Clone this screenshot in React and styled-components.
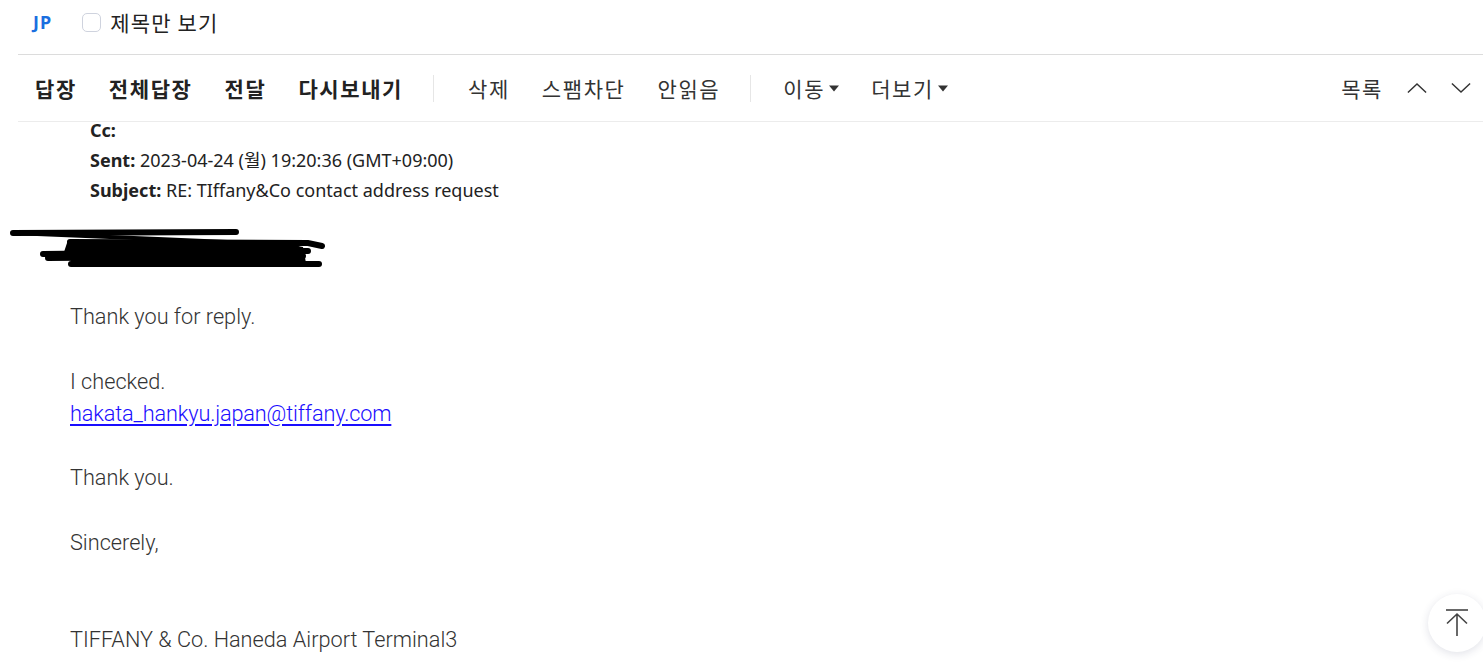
import React from "react";
import styled, { createGlobalStyle } from "styled-components";

const Global = createGlobalStyle`
  html, body { margin: 0; padding: 0; background: #fff; overflow: hidden; }
  body { font-family: "Noto Sans", "Noto Sans CJK KR", sans-serif; color: #222; }
`;

const Page = styled.div`
  width: 1483px;
  height: 666px;
  position: relative;
  overflow: hidden;
`;

const Chrome = styled.div`
  padding-left: 18px;
  position: relative;
  z-index: 2;
  background: #fff;
`;

const TopBar = styled.div`
  height: 55px;
  display: flex;
  align-items: center;
  padding-left: 15px;
  padding-bottom: 10px;
  border-bottom: 1px solid #dcdcdc;
  box-sizing: border-box;
`;

const Lang = styled.span`
  font-family: "Noto Sans", sans-serif;
  font-weight: 700;
  font-size: 18px;
  letter-spacing: 1px;
  color: #1a6fe0;
  margin-right: 30px;
`;

const CheckLabel = styled.label`
  display: flex;
  align-items: center;
  gap: 9px;
  font-family: "Noto Sans CJK KR", sans-serif;
  font-size: 21px;
  letter-spacing: 1.2px;
  color: #222;
  line-height: 1;
`;

const Box = styled.span`
  width: 19px;
  height: 19px;
  box-sizing: border-box;
  border: 1.5px solid #cfd3de;
  border-radius: 5px;
  display: inline-block;
`;

const Toolbar = styled.div`
  height: 67px;
  display: flex;
  align-items: center;
  padding-left: 17px;
  padding-right: 12px;
  border-bottom: 1px solid #ececec;
  box-sizing: border-box;
`;

const Group = styled.div`
  display: flex;
  align-items: center;
  gap: 32px;
`;

const Action = styled.button`
  all: unset;
  font-family: "Noto Sans CJK KR", sans-serif;
  font-size: 21px;
  letter-spacing: 1.6px;
  line-height: 1;
  font-weight: ${(p) => (p.$bold ? 700 : 400)};
  color: ${(p) => (p.$bold ? "#222" : "#333")};
  display: flex;
  align-items: center;
  gap: 4px;
  cursor: pointer;
`;

const Sep = styled.span`
  width: 1px;
  height: 27px;
  background: #e6e6e6;
  margin: 0 ${(p) => p.$after || 34}px 0 30px;
`;

const Right = styled.div`
  margin-left: auto;
  display: flex;
  align-items: center;
  gap: 24px;
`;

const IconBtn = styled.span`
  display: flex;
  align-items: center;
  justify-content: center;
  width: 20px;
  height: 20px;
`;

const Content = styled.div`
  margin-top: -7px;
  position: relative;
  z-index: 1;
`;

const Meta = styled.div`
  padding-left: 90px;
  font-family: "Noto Sans", "Noto Sans CJK KR", sans-serif;
  font-size: 18px;
  line-height: 30px;
  color: #222;
`;

const MetaRow = styled.div`
  white-space: nowrap;
`;

const Label = styled.b`
  font-weight: 700;
`;

const Redact = styled.svg`
  display: block;
  margin: 20px 0 0 8px;
`;

const Body = styled.div`
  padding-left: 70px;
  margin-top: 31px;
  font-family: "Roboto", sans-serif;
  font-weight: 300;
  font-size: 21.7px;
  line-height: 32.3px;
  color: #333;
`;

const Line = styled.div`
  min-height: 32.3px;
`;

const Mail = styled.a`
  color: #1a0dff;
  text-decoration: underline;
  text-underline-offset: 3px;
  letter-spacing: -0.15px;
`;

const TopButton = styled.button`
  all: unset;
  position: absolute;
  right: -3px;
  bottom: 14px;
  width: 58px;
  height: 58px;
  border-radius: 50%;
  background: #fff;
  box-shadow: 0 2px 8px rgba(40, 50, 90, 0.14);
  display: flex;
  align-items: center;
  justify-content: center;
  z-index: 3;
`;

const Caret = () => (
  <svg width="10" height="7" viewBox="0 0 10 7">
    <path d="M0 0.5 H10 L5 6.5 Z" fill="#333" />
  </svg>
);

export default function App() {
  return (
    <Page>
      <Global />
      <Chrome>
        <TopBar>
          <Lang>JP</Lang>
          <CheckLabel>
            <Box />
            제목만 보기
          </CheckLabel>
        </TopBar>
        <Toolbar>
          <Group>
            <Action $bold>답장</Action>
            <Action $bold>전체답장</Action>
            <Action $bold>전달</Action>
            <Action $bold>다시보내기</Action>
          </Group>
          <Sep />
          <Group>
            <Action>삭제</Action>
            <Action>스팸차단</Action>
            <Action>안읽음</Action>
          </Group>
          <Sep $after={32} />
          <Group>
            <Action>
              이동
              <Caret />
            </Action>
            <Action>
              더보기
              <Caret />
            </Action>
          </Group>
          <Right>
            <Action>목록</Action>
            <IconBtn>
              <svg width="22" height="12" viewBox="0 0 22 12">
                <path d="M1 11 L11 1.5 L21 11" fill="none" stroke="#333" strokeWidth="1.6" />
              </svg>
            </IconBtn>
            <IconBtn>
              <svg width="22" height="12" viewBox="0 0 22 12">
                <path d="M1 1 L11 10.5 L21 1" fill="none" stroke="#333" strokeWidth="1.6" />
              </svg>
            </IconBtn>
          </Right>
        </Toolbar>
      </Chrome>
      <Content>
        <Meta>
          <MetaRow>
            <Label>Cc:</Label>
          </MetaRow>
          <MetaRow>
            <Label>Sent:</Label> 2023-04-24 (월) 19:20:36 (GMT+09:00)
          </MetaRow>
          <MetaRow>
            <Label>Subject:</Label> RE: TIffany&amp;Co contact address request
          </MetaRow>
        </Meta>
        <Redact width="320" height="45" viewBox="0 0 320 45">
          <g stroke="#000" strokeLinecap="round" fill="none">
            <path d="M5 8 L228 7" strokeWidth="6" />
            <path d="M5 8 L150 14 L290 20" strokeWidth="4" />
            <path d="M62 17 L300 18 L314 21" strokeWidth="6" />
            <path d="M35 29 L300 26" strokeWidth="6" />
            <path d="M40 33 L295 31" strokeWidth="6" />
            <path d="M63 39 L311 39" strokeWidth="6" />
          </g>
          <path d="M60 15 L260 16 L295 22 L298 38 L70 41 L55 30 Z" fill="#000" />
        </Redact>
        <Body>
          <Line>Thank you for reply.</Line>
          <Line />
          <Line>I checked.</Line>
          <Line>
            <Mail href="#">hakata_hankyu.japan@tiffany.com</Mail>
          </Line>
          <Line />
          <Line>Thank you.</Line>
          <Line />
          <Line>Sincerely,</Line>
          <Line />
          <Line />
          <Line>TIFFANY &amp; Co. Haneda Airport Terminal3</Line>
        </Body>
      </Content>
      <TopButton>
        <svg width="26" height="30" viewBox="0 0 26 30">
          <path d="M2 2 H24" stroke="#444" strokeWidth="1.6" />
          <path d="M13 6 V28 M3 15.5 L13 6 L23 15.5" fill="none" stroke="#444" strokeWidth="1.6" />
        </svg>
      </TopButton>
    </Page>
  );
}
